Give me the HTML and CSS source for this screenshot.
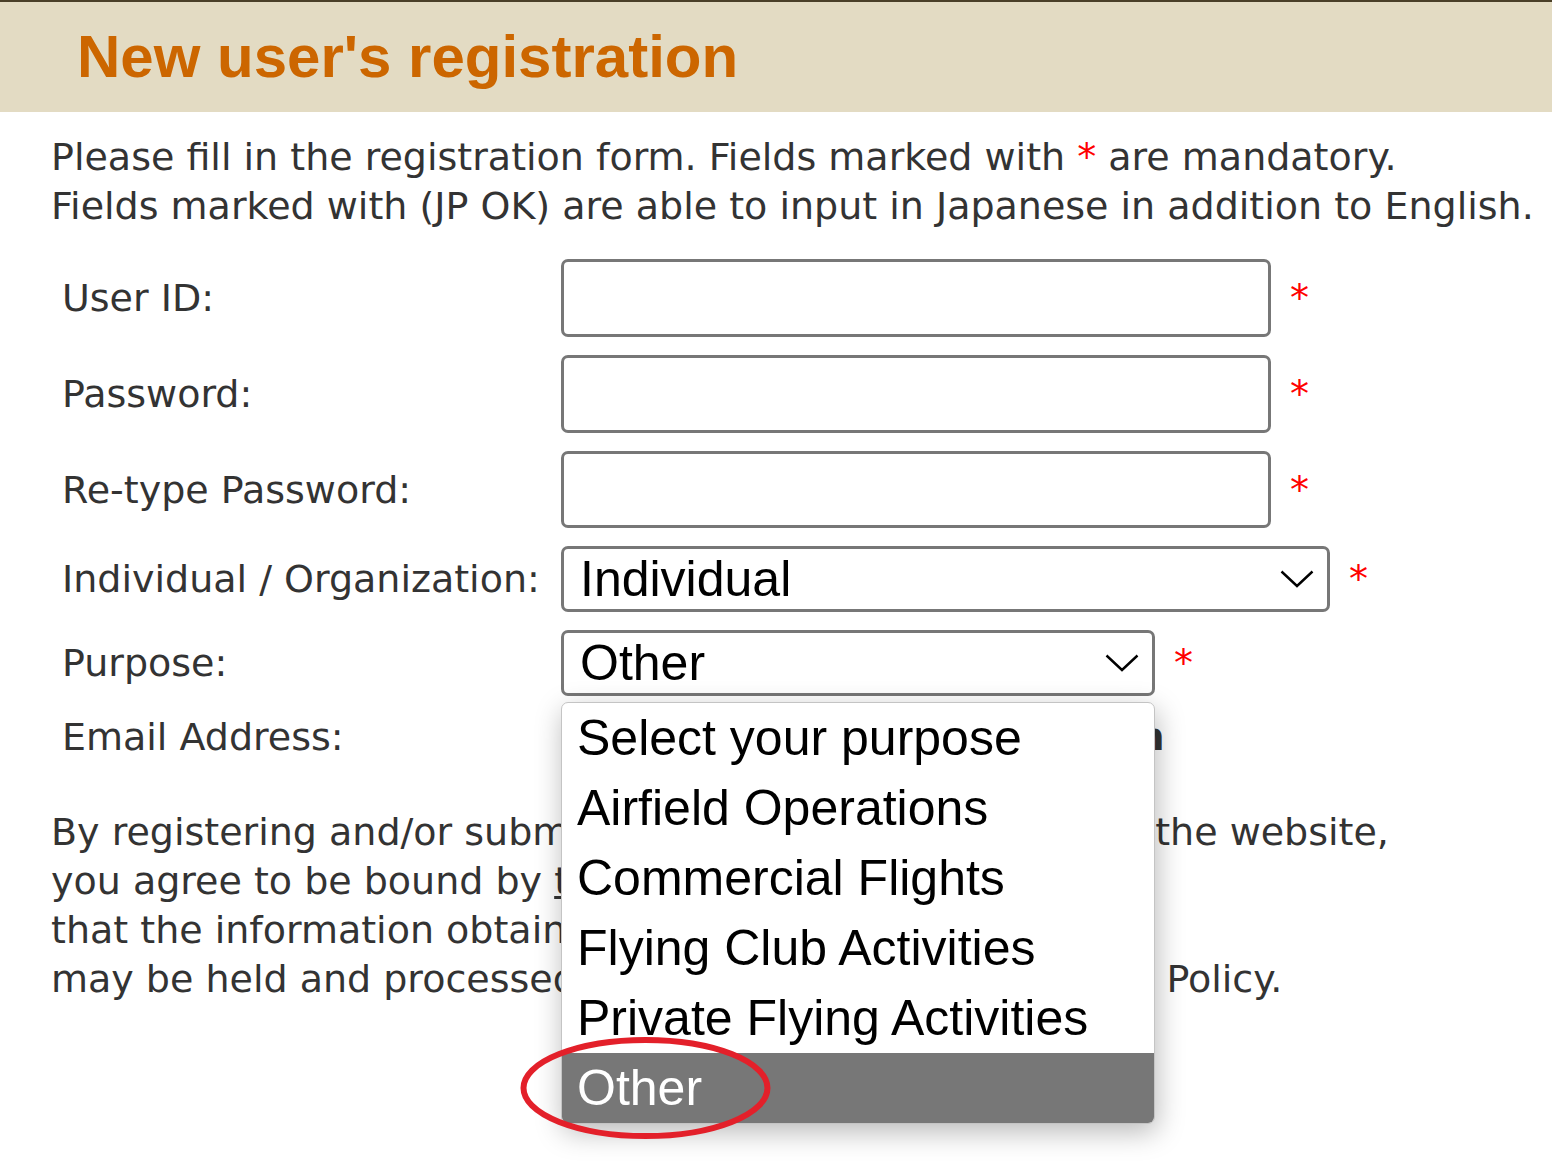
FILE: index.html
```html
<!DOCTYPE html>
<html lang="en">
<head>
    <meta charset="UTF-8">
    <meta name="viewport" content="width=device-width, initial-scale=1.0">
    <title>New user's registration</title>
    <link rel="stylesheet" href="styles.css">
</head>
<body>
    <header class="page-head">
        <h1>New user's registration</h1>
    </header>

    <main class="content">
        <p class="intro">
            Please fill in the registration form. Fields marked with <span class="req">*</span> are mandatory.<br>
            Fields marked with (JP OK) are able to input in Japanese in addition to English.
        </p>

        <form class="reg-form">
            <div class="row">
                <label for="userId">User ID:</label>
                <div class="field">
                    <input type="text" id="userId" class="text-box">
                    <span class="req">*</span>
                </div>
            </div>
            <div class="row">
                <label for="password">Password:</label>
                <div class="field">
                    <input type="password" id="password" class="text-box">
                    <span class="req">*</span>
                </div>
            </div>
            <div class="row">
                <label for="password2">Re-type Password:</label>
                <div class="field">
                    <input type="password" id="password2" class="text-box short">
                    <span class="req">*</span>
                </div>
            </div>
            <div class="row">
                <label>Individual / Organization:</label>
                <div class="field">
                    <div class="select-box wide">
                        <span>Individual</span>
                        <svg class="chevron" viewBox="0 0 34 18"><path d="M1.5 1.5 L17 16 L32.5 1.5"/></svg>
                    </div>
                    <span class="req">*</span>
                </div>
            </div>
            <div class="row">
                <label>Purpose:</label>
                <div class="field">
                    <div class="select-wrap">
                        <div class="select-box purpose">
                            <span>Other</span>
                            <svg class="chevron" viewBox="0 0 34 18"><path d="M1.5 1.5 L17 16 L32.5 1.5"/></svg>
                        </div>
                        <ul class="options">
                            <li>Select your purpose</li>
                            <li>Airfield Operations</li>
                            <li>Commercial Flights</li>
                            <li>Flying Club Activities</li>
                            <li>Private Flying Activities</li>
                            <li class="active">Other</li>
                            <svg class="mark" viewBox="0 0 253 104"><ellipse cx="126.5" cy="52" rx="122" ry="48"/></svg>
                        </ul>
                    </div>
                    <span class="req">*</span>
                </div>
            </div>
            <div class="row email-row">
                <label for="email">Email Address:</label>
                <div class="field">
                    <input type="text" id="email" class="text-box email">
                    <b class="note">Login</b>
                </div>
            </div>
        </form>

        <p class="terms">
            By registering and/or submitting any information through the website,<br>
            you agree to be bound by <a href="#">the Terms of Use</a> and agree<br>
            that the information obtained through this registration<br>
            may be held and processed in accordance with its Privacy Policy.
        </p>
    </main>
</body>
</html>
```

FILE: styles.css
```css
body {
    margin: 0;
    font-family: "DejaVu Sans", Verdana, sans-serif;
    color: #333;
    background-color: #fff;
}
.page-head {
    background-color: #e3dbc3;
    border-top: 2px solid #4a3f28;
    height: 110px;
    padding-left: 77px;
}
.page-head h1 {
    margin: 0;
    font: bold 60px "Liberation Sans", Arial, sans-serif;
    line-height: 110px;
    color: #cc6600;
}
.content {
    padding: 21px 0 200px 51px;
}
.intro {
    margin: 0;
    font-size: 38px;
    line-height: 49px;
    white-space: nowrap;
}
.req {
    color: #ff0000;
}
.reg-form {
    margin-top: 28px;
    display: flex;
    flex-direction: column;
    gap: 18px;
}
.row {
    display: grid;
    grid-template-columns: 510px auto;
    align-items: center;
    font-size: 38px;
}
.row label {
    padding-left: 11px;
}
.field {
    display: flex;
    align-items: center;
    gap: 19px;
}
.text-box {
    width: 710px;
    height: 78px;
    box-sizing: border-box;
    border: 3px solid #777;
    border-radius: 7px;
    margin: 0;
    background: #fff;
}
.text-box.short {
    height: 77px;
}
.select-box {
    height: 66px;
    box-sizing: border-box;
    border: 3px solid #777;
    border-radius: 7px;
    display: flex;
    align-items: center;
    justify-content: space-between;
    padding: 0 13px 0 16px;
    font: 50px "Liberation Sans", Arial, sans-serif;
    color: #000;
    background: #fff;
}
.select-box.wide {
    width: 769px;
}
.select-box.purpose {
    width: 594px;
}
.chevron {
    width: 34px;
    height: 18px;
    fill: none;
    stroke: #000;
    stroke-width: 2.4;
}
.select-wrap {
    position: relative;
}
.options {
    position: absolute;
    top: 72px;
    left: 0;
    width: 594px;
    margin: 0;
    padding: 0;
    list-style: none;
    box-sizing: border-box;
    border: 1px solid #c4c4c4;
    border-radius: 7px;
    background: #fff;
    box-shadow: 2px 8px 28px rgba(0, 0, 0, 0.28);
    font: 50px "Liberation Sans", Arial, sans-serif;
    color: #000;
    z-index: 2;
}
.options li {
    height: 70px;
    line-height: 70px;
    padding-left: 15px;
}
.options li.active {
    background-color: #777;
    color: #fff;
    border-radius: 0 0 6px 6px;
}
.mark {
    position: absolute;
    left: -43px;
    top: 333px;
    width: 253px;
    height: 104px;
    fill: none;
    stroke: #e3202a;
    stroke-width: 6;
}
.email-row {
    height: 46px;
}
.text-box.email {
    width: 477px;
    height: 46px;
}
.note {
    font-weight: bold;
    margin-left: -10px;
}
.terms {
    margin: 48px 0 0;
    font-size: 38px;
    line-height: 49px;
    white-space: nowrap;
}
.terms a {
    color: #333;
}
```
